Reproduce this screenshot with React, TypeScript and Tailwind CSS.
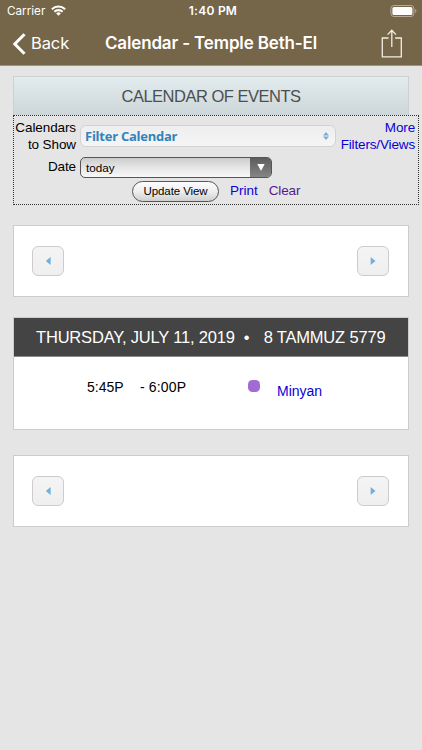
interface PagerCardProps {
  className?: string;
}

function StatusBar() {
  return (
    <div className="flex h-[22px] items-center justify-between pl-[7px] pr-[5px] text-[12px]">
      <div className="flex w-[129px] items-center gap-[6px]">
        <span className="pt-[1px] text-[11.7px]">Carrier</span>
        <svg width="15" height="11" viewBox="0 0 15 11" fill="none" stroke="white" strokeWidth="2.1">
          <path d="M0.9 4.2a9.3 9.3 0 0 1 13.2 0" />
          <path d="M3.4 6.8a5.8 5.8 0 0 1 8.2 0" />
          <path d="M7.5 10.8 5.2 8.4a3.3 3.3 0 0 1 4.6 0z" fill="white" stroke="none" />
        </svg>
      </div>
      <span className="pl-[2px] text-[12px] font-semibold tracking-[0.25px]">1:40 PM</span>
      <div className="flex w-[129px] justify-end">
        <svg width="27" height="12" viewBox="0 0 27 12">
          <rect x="0.9" y="0.5" width="23" height="11" rx="3" fill="none" stroke="#b5aa96" />
          <rect x="2.4" y="2" width="20" height="8" rx="1.6" fill="white" />
          <path d="M25.2 4v4c1.6-.6 1.6-3.4 0-4z" fill="#b5aa96" />
        </svg>
      </div>
    </div>
  );
}

function NavBar() {
  return (
    <div className="flex h-[43px] items-center justify-between pl-[12px] pr-[19px]">
      <div className="flex w-[79px] items-center gap-[5px]">
        <svg width="14" height="22" viewBox="0 0 14 22" fill="none" stroke="white" strokeWidth="3">
          <path d="M12.5 1.2 2.8 11l9.7 9.8" />
        </svg>
        <span className="text-[16.5px] tracking-[-0.1px]">Back</span>
      </div>
      <h1 className="whitespace-nowrap text-[17px] font-semibold tracking-[-0.15px]">Calendar - Temple Beth-El</h1>
      <div className="flex w-[72px] justify-end">
        <svg width="22" height="29" viewBox="0 0 22 29" fill="none" stroke="#f3eee2" strokeWidth="1.3">
          <path d="M7.5 9H1.3v18.8h19V9h-6.2M10.8 18V1.4M6.6 5.6l4.2-4.3L15 5.6" />
        </svg>
      </div>
    </div>
  );
}

function PagerButton({ direction }: { direction: "prev" | "next" }) {
  return (
    <button className="flex h-[30px] w-[32px] items-center justify-center rounded-[6px] border border-[#cccccc] bg-gradient-to-b from-[#f4f4f4] to-[#efefef]">
      <svg width="6" height="8" viewBox="0 0 6 8" fill="#72b0dc">
        {direction === "prev" ? <path d="M5.6 0v8L.8 4z" /> : <path d="M.7 0v8L5.5 4z" />}
      </svg>
    </button>
  );
}

function PagerCard({ className = "" }: PagerCardProps) {
  return (
    <div className={`flex h-[72px] w-[396px] items-center justify-between border border-[#cccccc] bg-white pl-[18px] pr-[19px] ${className}`}>
      <PagerButton direction="prev" />
      <PagerButton direction="next" />
    </div>
  );
}

function FilterForm() {
  return (
    <form className="h-[90px] w-[406px] border border-dotted border-[#333333] text-[13.5px] text-black">
      <div className="flex h-[40px]">
        <label className="w-[62px] whitespace-nowrap pt-[3px] text-right leading-[17px] tracking-[-0.1px]">
          Calendars
          <br />
          to Show
        </label>
        <div className="ml-[4px] mt-[9px] flex h-[22px] w-[256px] items-center justify-between rounded-[6px] border border-[#d3d3d3] bg-gradient-to-b from-[#eeeeee] to-[#f5f5f5] pl-[4px] pr-[6px]">
          <span className="whitespace-nowrap pt-[1px] font-['Open_Sans',sans-serif] text-[13px] font-bold tracking-[-0.25px] text-[#3383bb]">
            Filter Calendar
          </span>
          <svg width="6" height="8" viewBox="0 0 6 8" fill="#72b0dc">
            <path d="M3 0 6 3.4H0zM3 8 0 4.6h6z" />
          </svg>
        </div>
        <a className="w-[79px] whitespace-nowrap pt-[3px] text-right leading-[17px] tracking-[-0.15px] text-[#0a00d8]">
          More
          <br />
          Filters/Views
        </a>
      </div>
      <div className="flex h-[24px] items-start">
        <label className="w-[62px] pt-[2px] text-right leading-[17px] tracking-[-0.1px]">Date</label>
        <div className="ml-[4px] mt-[1px] flex h-[21px] w-[192px] overflow-hidden rounded-[5px] border border-[#555555] bg-gradient-to-b from-[#cccccc] via-[#e6e6e6] to-[#f8f8f8]">
          <span className="flex-1 pl-[5px] text-[11.7px] leading-[20px]">today</span>
          <span className="flex w-[21px] items-center justify-center bg-gradient-to-b from-[#5d5d5d] to-[#858585]">
            <svg width="8" height="7" viewBox="0 0 8 7" fill="white">
              <path d="M.3 0h7.4L4 7z" />
            </svg>
          </span>
        </div>
      </div>
      <div className="flex items-center pl-[118px]">
        <button className="mt-[1px] h-[21px] w-[87px] whitespace-nowrap rounded-full border border-[#555555] bg-gradient-to-b from-[#fdfdfd] via-[#eeeeee] to-[#cfcfcf] text-[11.5px] tracking-[-0.1px]">
          Update View
        </button>
        <a className="ml-[11px] text-[13.5px] leading-[20px] text-[#0a00d8]">Print</a>
        <a className="ml-[11px] text-[13.5px] leading-[20px] tracking-[-0.15px] text-[#551a8b]">Clear</a>
      </div>
    </form>
  );
}

function DayCard() {
  return (
    <section className="mt-[20px] h-[113px] w-[396px] border border-[#cccccc] bg-white">
      <h3 className="flex h-[39px] items-center whitespace-pre border-b border-[#8a8a8a] bg-[#444444] pl-[22px] text-[16.5px] text-white">
        <span className="tracking-[-0.18px]">THURSDAY, JULY 11, 2019</span>
        <span className="ml-[9px]">•</span>
        <span className="ml-[14px] tracking-[-0.18px]">8 TAMMUZ 5779</span>
      </h3>
      <div className="flex items-start pt-[20px] text-[14px] leading-[20px] text-black">
        <span className="ml-[73px] w-[53px]">5:45P</span>
        <span className="w-[108px] tracking-[0.15px]">- 6:00P</span>
        <span className="mt-[3px] h-[12px] w-[12px] rounded-[4.5px] bg-[#a26bd2]" />
        <a className="ml-[17px] mt-[4px] text-[#0a00d8]">Minyan</a>
      </div>
    </section>
  );
}

export default function App() {
  return (
    <div className="min-h-[750px] w-[422px] overflow-hidden bg-[#e5e5e5] font-['Liberation_Sans',Arial,sans-serif]">
      <header className="h-[66px] border-b border-[#a0917a] bg-[#756549] font-['Inter',sans-serif] text-white">
        <StatusBar />
        <NavBar />
      </header>
      <main className="pl-[13px] pt-[10px]">
        <h2 className="flex h-[39px] w-[396px] items-center justify-center border border-b-0 border-[#cbd0d2] bg-gradient-to-b from-[#e2ecef] to-[#cdd6d9] text-[16.5px] tracking-[-0.5px] text-[#4c4f50]">
          CALENDAR OF EVENTS
        </h2>
        <FilterForm />
        <PagerCard className="mt-[20px]" />
        <DayCard />
        <PagerCard className="mt-[25px]" />
      </main>
    </div>
  );
}
